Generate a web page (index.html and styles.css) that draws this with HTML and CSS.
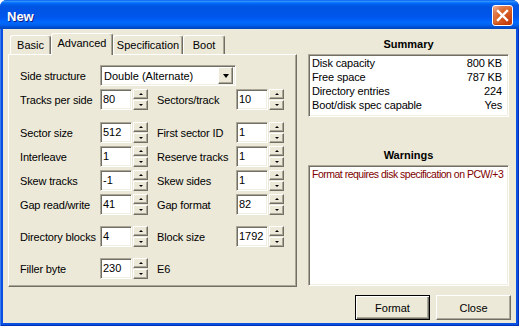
FILE: index.html
```html
<!DOCTYPE html>
<html>
<head>
<meta charset="utf-8">
<title>New</title>
<link rel="stylesheet" href="styles.css">
</head>
<body>
<div class="window">
  <div class="titlebar">
    <span class="title">New</span>
    <div class="close-btn">
      <svg width="19" height="19" viewBox="0 0 19 19"><path d="M5 5 L14 14 M14 5 L5 14" stroke="#fff" stroke-width="2.4" stroke-linecap="square" fill="none"/></svg>
    </div>
  </div>
  <div class="client">
    <div class="main">
      <div class="tabctl">
        <div class="tabs">
          <div class="tab w-basic">Basic</div>
          <div class="tab active w-adv">Advanced</div>
          <div class="tab w-spec">Specification</div>
          <div class="tab w-boot">Boot</div>
        </div>
        <div class="panel">
          <div class="row first">
            <span class="lbl">Side structure</span>
            <div class="select sunken"><span>Double (Alternate)</span><span class="ddbtn raised"><i class="tri-down"></i></span></div>
          </div>
          <div class="row">
            <span class="lbl">Tracks per side</span>
            <div class="spin"><div class="edit sunken">80</div><div class="arrows"><div class="ab raised"><i class="up"></i></div><div class="ab raised"><i class="dn"></i></div></div></div>
            <span class="lbl2">Sectors/track</span>
            <div class="spin"><div class="edit sunken">10</div><div class="arrows"><div class="ab raised"><i class="up"></i></div><div class="ab raised"><i class="dn"></i></div></div></div>
          </div>
          <div class="row gap12">
            <span class="lbl">Sector size</span>
            <div class="spin"><div class="edit sunken">512</div><div class="arrows"><div class="ab raised"><i class="up"></i></div><div class="ab raised"><i class="dn"></i></div></div></div>
            <span class="lbl2">First sector ID</span>
            <div class="spin"><div class="edit sunken">1</div><div class="arrows"><div class="ab raised"><i class="up"></i></div><div class="ab raised"><i class="dn"></i></div></div></div>
          </div>
          <div class="row">
            <span class="lbl">Interleave</span>
            <div class="spin"><div class="edit sunken">1</div><div class="arrows"><div class="ab raised"><i class="up"></i></div><div class="ab raised"><i class="dn"></i></div></div></div>
            <span class="lbl2">Reserve tracks</span>
            <div class="spin"><div class="edit sunken">1</div><div class="arrows"><div class="ab raised"><i class="up"></i></div><div class="ab raised"><i class="dn"></i></div></div></div>
          </div>
          <div class="row">
            <span class="lbl">Skew tracks</span>
            <div class="spin"><div class="edit sunken">-1</div><div class="arrows"><div class="ab raised"><i class="up"></i></div><div class="ab raised"><i class="dn"></i></div></div></div>
            <span class="lbl2">Skew sides</span>
            <div class="spin"><div class="edit sunken">1</div><div class="arrows"><div class="ab raised"><i class="up"></i></div><div class="ab raised"><i class="dn"></i></div></div></div>
          </div>
          <div class="row">
            <span class="lbl">Gap read/write</span>
            <div class="spin"><div class="edit sunken">41</div><div class="arrows"><div class="ab raised"><i class="up"></i></div><div class="ab raised"><i class="dn"></i></div></div></div>
            <span class="lbl2">Gap format</span>
            <div class="spin"><div class="edit sunken">82</div><div class="arrows"><div class="ab raised"><i class="up"></i></div><div class="ab raised"><i class="dn"></i></div></div></div>
          </div>
          <div class="row gap11">
            <span class="lbl">Directory blocks</span>
            <div class="spin"><div class="edit sunken">4</div><div class="arrows"><div class="ab raised"><i class="up"></i></div><div class="ab raised"><i class="dn"></i></div></div></div>
            <span class="lbl2">Block size</span>
            <div class="spin"><div class="edit sunken">1792</div><div class="arrows"><div class="ab raised"><i class="up"></i></div><div class="ab raised"><i class="dn"></i></div></div></div>
          </div>
          <div class="row gap11">
            <span class="lbl">Filler byte</span>
            <div class="spin"><div class="edit sunken">230</div><div class="arrows"><div class="ab raised"><i class="up"></i></div><div class="ab raised"><i class="dn"></i></div></div></div>
            <span class="lbl2">E6</span>
          </div>
        </div>
      </div>
      <div class="side">
        <div class="heading">Summary</div>
        <div class="box sunken summary">
          <div class="kv"><span>Disk capacity</span><span>800 KB</span></div>
          <div class="kv"><span>Free space</span><span>787 KB</span></div>
          <div class="kv"><span>Directory entries</span><span>224</span></div>
          <div class="kv"><span>Boot/disk spec capable</span><span>Yes</span></div>
        </div>
        <div class="heading warn-h">Warnings</div>
        <div class="box sunken warnings">Format requires disk specification on PCW/+3</div>
      </div>
    </div>
    <div class="buttons">
      <div class="btn default">Format</div>
      <div class="btn raised">Close</div>
    </div>
  </div>
</div>
</body>
</html>
```
FILE: styles.css
```css
html, body {
  margin: 0;
  padding: 0;
  background: #ffffff;
}

body {
  font-family: "Liberation Sans", Arial, sans-serif;
  font-size: 11px;
  color: #000;
}

.window {
  width: 519px;
  height: 326px;
  display: flex;
  flex-direction: column;
  background: #0a4fdf;
  border-radius: 7px 7px 0 0;
  overflow: hidden;
  box-shadow: inset 1px 0 #3b7bf0, inset -1px 0 #0030b8, inset 0 -1px #0030b8;
}

.titlebar {
  height: 29px;
  flex: none;
  display: flex;
  align-items: center;
  justify-content: space-between;
  padding: 1px 6px 0 7px;
  box-sizing: border-box;
  background: linear-gradient(to bottom, #0058ee 0%, #3593ff 4%, #288eff 6%, #127dff 8%, #036ffc 10%, #0262ee 14%, #0057e5 20%, #0054e3 24%, #0055eb 56%, #005bf5 66%, #026afe 76%, #0062ef 86%, #0052d6 92%, #0046c0 100%);
}

.title {
  color: #fff;
  font-family: "Liberation Sans", Arial, sans-serif;
  font-weight: bold;
  font-size: 13px;
  margin-top: 2px;
  text-shadow: 1px 1px #0a1e8a;
}

.close-btn {
  width: 21px;
  height: 21px;
  box-sizing: border-box;
  border: 1px solid #fff;
  border-radius: 3px;
  display: flex;
  align-items: center;
  justify-content: center;
  background: radial-gradient(circle at 85% 85%, #c43a10 0%, #dc6527 55%, #e08058 75%, #f0b090 92%, #ffd8c4 100%);
  box-shadow: inset 0 -1px 2px #c03a00;
}

.client {
  flex: 1;
  margin: 0 3px 3px 3px;
  background: #ece9d8;
  padding: 4px 5px 0 5px;
  display: flex;
  flex-direction: column;
}

.main {
  display: flex;
}

.tabctl {
  width: 289px;
  flex: none;
}

.tabs {
  display: flex;
  align-items: flex-end;
  height: 21px;
  padding-left: 2px;
}

.tab {
  box-sizing: border-box;
  height: 19px;
  border: 1px solid;
  border-color: #fff #716f64 transparent #fff;
  border-bottom: 0;
  border-radius: 3px 3px 0 0;
  box-shadow: inset -1px 0 #aca899;
  text-align: center;
  line-height: 18px;
  white-space: nowrap;
  background: #ece9d8;
}

.tab.active {
  height: 22px;
  margin-bottom: -1px;
  position: relative;
  z-index: 1;
  line-height: 19px;
}

.w-basic { width: 41px; }
.w-adv { width: 62px; }
.w-spec { width: 70px; }
.w-boot { width: 42px; }

.panel {
  box-sizing: border-box;
  height: 233px;
  border: 1px solid;
  border-color: #fff #716f64 #716f64 #fff;
  box-shadow: inset -1px -1px #aca899;
  padding: 10px 0 0 11px;
}

.row {
  display: flex;
  align-items: center;
  height: 21px;
  margin-top: 3px;
}

.row.first { margin-top: 0; }
.row.gap12 { margin-top: 12px; }
.row.gap11 { margin-top: 11px; }

.lbl {
  width: 80px;
  flex: none;
  white-space: nowrap;
  letter-spacing: -0.15px;
}

.lbl2 {
  width: 79px;
  flex: none;
  margin-left: 9px;
  white-space: nowrap;
  letter-spacing: -0.15px;
}

.sunken {
  border: 1px solid;
  border-color: #aca899 #fff #fff #aca899;
  box-shadow: inset 1px 1px #716f64, inset -1px -1px #f1efe2;
}

.raised {
  border: 1px solid;
  border-color: #fff #716f64 #716f64 #fff;
  box-shadow: inset -1px -1px #aca899;
}

.select {
  box-sizing: border-box;
  width: 136px;
  height: 21px;
  background: #fff;
  display: flex;
  align-items: center;
  justify-content: space-between;
  padding: 2px 2px 2px 3px;
}

.ddbtn {
  box-sizing: border-box;
  width: 15px;
  height: 17px;
  background: #ece9d8;
  display: flex;
  align-items: center;
  justify-content: center;
}

.tri-down {
  width: 0;
  height: 0;
  border-left: 3.5px solid transparent;
  border-right: 3.5px solid transparent;
  border-top: 4px solid #000;
  margin-left: 1px;
}

.spin {
  display: flex;
  align-items: center;
  flex: none;
}

.edit {
  box-sizing: border-box;
  width: 32px;
  height: 21px;
  background: #fff;
  padding: 0 0 0 2px;
  line-height: 19px;
}

.arrows {
  width: 15px;
  height: 21px;
  margin-left: 1px;
  display: flex;
  flex-direction: column;
  justify-content: space-between;
}

.ab {
  box-sizing: border-box;
  height: 10px;
  background: #ece9d8;
  display: flex;
  align-items: center;
  justify-content: center;
}

.up {
  width: 0;
  height: 0;
  border-left: 2px solid transparent;
  border-right: 2px solid transparent;
  border-bottom: 2px solid #000;
}

.dn {
  width: 0;
  height: 0;
  border-left: 2px solid transparent;
  border-right: 2px solid transparent;
  border-top: 2px solid #000;
}

.side {
  width: 201px;
  margin-left: 11px;
  flex: none;
  display: flex;
  flex-direction: column;
}

.heading {
  height: 21px;
  line-height: 23px;
  text-align: center;
  font-weight: bold;
}

.warn-h {
  margin-top: 27px;
}

.box {
  box-sizing: border-box;
  background: #fff;
}

.summary {
  height: 63px;
  padding: 1px 6px 0 3px;
}

.kv {
  display: flex;
  justify-content: space-between;
  line-height: 14px;
  letter-spacing: -0.15px;
}

.warnings {
  height: 121px;
  padding: 1px 3px;
  color: #800000;
  font-size: 10.5px;
  letter-spacing: -0.5px;
  line-height: 14px;
  white-space: nowrap;
  overflow: hidden;
}

.buttons {
  display: flex;
  justify-content: flex-end;
  gap: 6px;
  margin-top: 8px;
}

.btn {
  box-sizing: border-box;
  width: 75px;
  height: 25px;
  display: flex;
  align-items: center;
  justify-content: center;
  background: #ece9d8;
}

.btn.default {
  border: 1px solid #000;
  box-shadow: inset 1px 1px #fff, inset -1px -1px #716f64, inset -2px -2px #aca899;
}
```
